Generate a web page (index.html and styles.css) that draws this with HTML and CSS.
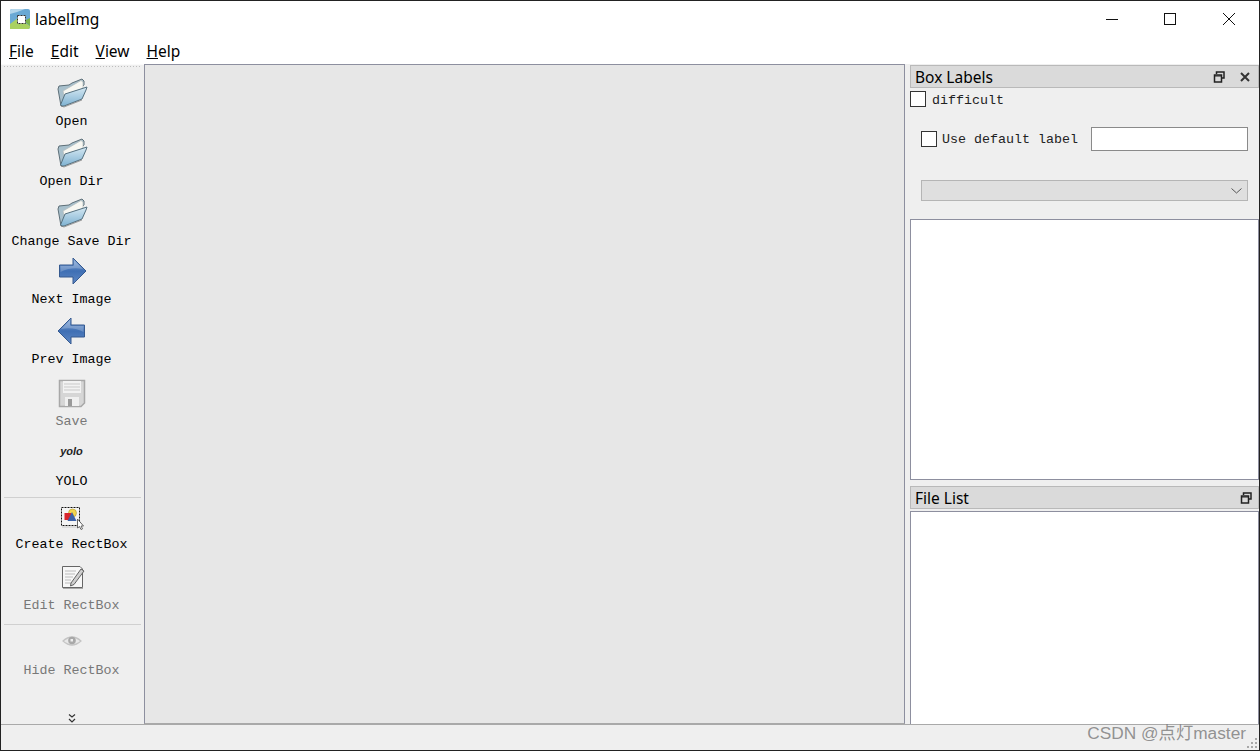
FILE: index.html
```html
<!DOCTYPE html>
<html lang="en">
<head>
<meta charset="utf-8">
<title>labelImg</title>
<link rel="stylesheet" href="styles.css">
</head>
<body>
<svg class="defs" width="0" height="0" aria-hidden="true">
  <defs>
    <linearGradient id="fb" x1="0" y1="0" x2="0" y2="1"><stop offset="0" stop-color="#d5e8f2"/><stop offset="1" stop-color="#7fb2d2"/></linearGradient>
    <linearGradient id="ab" x1="0" y1="0" x2="0" y2="1"><stop offset="0" stop-color="#8fb0dc"/><stop offset=".5" stop-color="#3f6fb4"/><stop offset="1" stop-color="#5f88c4"/></linearGradient>
    <symbol id="folder" viewBox="0 0 32 32">
      <path d="M2 12 L3 9 L13 8 L16 6 L26 2 L28 4 L28 8 L9 27 L5 29 Z" fill="#a8c0cc" stroke="#5d6f78" stroke-width="1"/>
      <path d="M7 14 L25 3.500 L27 5 L27 11 L9 22 Z" fill="#f7f7f2" stroke="#b5bcbc" stroke-width=".7"/>
      <path d="M6 29 L4.500 28 L9 17 L31 10 L30 13 L26 22 L8 29 Z" fill="url(#fb)" stroke="#55707f" stroke-width="1"/>
      <path d="M5 29 L8 30 L26 23" fill="none" stroke="#666" stroke-width="1" opacity=".6"/>
    </symbol>
    <symbol id="arrow" viewBox="0 0 32 32">
      <path d="M3.500 10 H17 V3 L30 16 L17 29 V22 H3.500 Z" fill="url(#ab)" stroke="#35598f" stroke-width="1"/>
      <path d="M4.500 11 H18 V5.500 L27 14 C18 12 10 14 4.500 17 Z" fill="#fff" opacity=".22"/>
    </symbol>
    <symbol id="restore" viewBox="0 0 12 12">
      <path d="M3.500 3 V1 H11 V7 H8.500" fill="none" stroke="#222" stroke-width="1.500"/>
      <rect x="1.500" y="4" width="7" height="7" fill="none" stroke="#222" stroke-width="1.500"/>
      <path d="M1.500 5 H8.500" stroke="#222" stroke-width="1"/>
    </symbol>
  </defs>
</svg>
<div class="window">
  <header class="titlebar">
    <svg class="app-icon" viewBox="0 0 20 20" width="20" height="20">
      <rect x="0" y="0" width="20" height="20" rx="2" fill="#6aa9d4"/>
      <path d="M0 5 Q8 3 15 0 H2 Q0 0 0 2 Z" fill="#b4d6ea"/>
      <path d="M0 20 V15 L8 9 L20 17 V18 Q20 20 18 20 Z" fill="#a9d160"/>
      <path d="M14 12 L20 9 V17 Z" fill="#7cb44c"/>
      <rect x="7.500" y="6.500" width="8" height="8" fill="#fff" stroke="#333" stroke-width="1" stroke-dasharray="2 1"/>
    </svg>
    <span class="app-name">labelImg</span>
    <div class="win-controls">
      <svg class="win-btn" width="12" height="12" viewBox="0 0 12 12"><path d="M0 6.500 H12" stroke="#111" stroke-width="1"/></svg>
      <svg class="win-btn" width="12" height="12" viewBox="0 0 12 12"><rect x=".5" y=".5" width="11" height="11" fill="none" stroke="#111" stroke-width="1"/></svg>
      <svg class="win-btn win-close" width="12" height="12" viewBox="0 0 12 12"><path d="M0 0 L12 12 M12 0 L0 12" stroke="#111" stroke-width="1"/></svg>
    </div>
  </header>
  <nav class="menubar">
    <span><u>F</u>ile</span>
    <span><u>E</u>dit</span>
    <span><u>V</u>iew</span>
    <span><u>H</u>elp</span>
  </nav>
  <main class="main">
    <aside class="toolbar">
      <div class="handle"></div>
      <div class="tool tool-first">
        <svg class="icon" width="32" height="32"><use href="#folder"/></svg>
        <span class="tool-label">Open</span>
      </div>
      <div class="tool">
        <svg class="icon" width="32" height="32"><use href="#folder"/></svg>
        <span class="tool-label">Open Dir</span>
      </div>
      <div class="tool">
        <svg class="icon" width="32" height="32"><use href="#folder"/></svg>
        <span class="tool-label">Change Save Dir</span>
      </div>
      <div class="tool tool-short">
        <svg class="icon" width="32" height="32"><use href="#arrow"/></svg>
        <span class="tool-label">Next Image</span>
      </div>
      <div class="tool">
        <svg class="icon icon-flip" width="32" height="32"><use href="#arrow"/></svg>
        <span class="tool-label">Prev Image</span>
      </div>
      <div class="tool tool-tall disabled">
        <svg class="icon" width="32" height="32" viewBox="0 0 32 32">
          <path d="M3.500 3.500 H28.500 V26 L25 29.500 H3.500 Z" fill="#d6d6d6" stroke="#a8a8a8" stroke-width="1.500"/>
          <rect x="7" y="4" width="18" height="12" fill="#f2f2f2"/>
          <path d="M8 7 H24 M8 10 H24 M8 13 H24" stroke="#c9c9c9"/>
          <rect x="9" y="20" width="14" height="9" fill="#f0f0f0"/>
          <rect x="12" y="22" width="4" height="7" fill="#9a9a9a"/>
        </svg>
        <span class="tool-label">Save</span>
      </div>
      <div class="tool tool-yolo">
        <div class="icon yolo-icon">yolo</div>
        <span class="tool-label">YOLO</span>
      </div>
      <div class="sep sep-first"></div>
      <div class="tool tool-create">
        <svg class="icon" width="32" height="32" viewBox="0 0 32 32">
          <rect x="5.500" y="6.500" width="18" height="18" fill="#f5f5f5" stroke="#111" stroke-width="1" stroke-dasharray="2 1"/>
          <path d="M6 26 H24" stroke="#ccc"/>
          <circle cx="16.500" cy="12" r="4" fill="#f2d54e" stroke="#b09a30" stroke-width=".6"/>
          <rect x="8.500" y="12" width="7" height="7" fill="#d8262c"/>
          <path d="M16 11 L20.500 20 H11.500 Z" fill="#3c62a8"/>
          <path d="M21.500 18 V27 L23.500 25.500 L25 28.500 L26.500 27.800 L25 25 H27.500 Z" fill="#fff" stroke="#555" stroke-width=".9"/>
        </svg>
        <span class="tool-label">Create RectBox</span>
      </div>
      <div class="tool tool-edit disabled">
        <svg class="icon" width="32" height="32" viewBox="0 0 32 32">
          <path d="M6.500 5.500 H24 L26.500 8 V26.500 H6.500 Z" fill="#f7f7f7" stroke="#666" stroke-width="1"/>
          <path d="M7 27.500 H27" stroke="#aaa"/>
          <path d="M9 10 H20 M9 13 H19 M9 16 H17 M9 19 H15 M9 22 H15" stroke="#bbb"/>
          <path d="M15 22 L25 8 L28 10 L18 23.500 L14.500 25 Z" fill="#cfcfcf" stroke="#555" stroke-width=".9"/>
        </svg>
        <span class="tool-label">Edit RectBox</span>
      </div>
      <div class="sep sep-second"></div>
      <div class="tool tool-hide disabled">
        <svg class="icon" width="32" height="32" viewBox="0 0 32 32">
          <path d="M7 16 Q16 8 25 16 Q16 24 7 16 Z" fill="#e8e8e8" stroke="#c4c4c4" stroke-width="1.200"/>
          <circle cx="16" cy="15.500" r="3.800" fill="#a8a8a8"/>
          <rect x="14.500" y="14" width="2.500" height="2.500" fill="#eee"/>
        </svg>
        <span class="tool-label">Hide RectBox</span>
      </div>
      <svg class="more" width="8" height="9" viewBox="0 0 8 9"><path d="M1 .5 L4 3 L7 .5 M1 5 L4 8 L7 5" fill="none" stroke="#333" stroke-width="1.200"/></svg>
    </aside>
    <section class="canvas"></section>
    <aside class="docks">
      <div class="dock-title">
        <span>Box Labels</span>
        <svg class="dock-btn" width="12" height="12"><use href="#restore"/></svg>
        <svg class="dock-btn" width="10" height="10" viewBox="0 0 10 10"><path d="M1 1 L9 9 M9 1 L1 9" stroke="#333" stroke-width="2"/></svg>
      </div>
      <label class="check-row">
        <input class="check" type="checkbox">
        <span class="check-text">difficult</span>
      </label>
      <div class="default-row">
        <input class="check" type="checkbox">
        <span class="default-label">Use default label</span>
        <input class="text-input" type="text">
      </div>
      <div class="combo">
        <svg width="11" height="6" viewBox="0 0 11 6"><path d="M.5 .5 L5.500 5 L10.500 .5" fill="none" stroke="#555" stroke-width="1"/></svg>
      </div>
      <div class="list list-labels"></div>
      <div class="dock-title dock-title-files">
        <span>File List</span>
        <svg class="dock-btn dock-btn-solo" width="12" height="12"><use href="#restore"/></svg>
      </div>
      <div class="list list-files"></div>
    </aside>
  </main>
  <footer class="statusbar">
    <svg class="grip" width="11" height="11" viewBox="0 0 11 11">
      <path d="M8 0h2v2H8z M4 4h2v2H4z M8 4h2v2H8z M0 8h2v2H0z M4 8h2v2H4z M8 8h2v2H8z" fill="#a8a8a8"/>
    </svg>
  </footer>
  <div class="watermark">CSDN @点灯master</div>
</div>
</body>
</html>
```
FILE: styles.css
```css
* { box-sizing: border-box; }
html, body { margin: 0; padding: 0; }
body { font-family: "Noto Sans", "Open Sans", sans-serif; background: #fff; }
.defs { position: absolute; }
.window {
  position: relative;
  width: 1260px;
  height: 751px;
  border: 1px solid #222;
  display: flex;
  flex-direction: column;
  overflow: hidden;
  background: #fff;
}
.titlebar {
  height: 36px;
  display: flex;
  align-items: center;
  padding-left: 9px;
  flex: none;
}
.app-icon { margin-right: 5px; }
.app-name { font-size: 15.5px; color: #000; }
.win-controls { margin-left: auto; display: flex; gap: 46px; padding-right: 24px; align-items: center; }
.win-btn { display: block; }
.win-close { margin-left: 1px; }
.menubar {
  height: 27px;
  flex: none;
  display: flex;
  gap: 17px;
  padding: 1px 0 0 8px;
  align-items: center;
  font-size: 15.5px;
  color: #000;
}
.main { flex: 1; display: flex; min-height: 0; background: #efefef; }
.toolbar {
  width: 143px;
  flex: none;
  display: flex;
  flex-direction: column;
  padding-right: 2px;
  font-family: "Liberation Mono", monospace;
  font-size: 13.33px;
  color: #000;
  border-top: 1px solid #fafafa;
}
.handle {
  height: 3px;
  margin: 0 0 0 2px;
  flex: none;
  background-image: radial-gradient(circle, #bdbdbd 0.8px, transparent 1px);
  background-size: 3px 3px;
}
.tool {
  height: 60px;
  flex: none;
  display: flex;
  flex-direction: column;
  align-items: center;
  justify-content: flex-end;
}
.tool-first { height: 63px; }
.tool-short { height: 58px; }
.tool-tall { height: 62px; }
.tool-create { height: 56px; }
.tool-edit { height: 61px; }
.tool-hide { height: 55px; }
.icon { display: block; flex: none; margin-bottom: 6px; }
.icon-flip { transform: scaleX(-1); }
.tool-yolo .icon { margin-bottom: 8px; }
.tool-create .icon { margin-bottom: 5px; }
.tool-hide .icon { margin-bottom: 7px; }
.tool-label { height: 16px; line-height: 14px; white-space: nowrap; }
.disabled .tool-label { color: #787878; }
.yolo-icon {
  width: 32px;
  height: 32px;
  text-align: center;
  font-family: "Liberation Sans", sans-serif;
  font-size: 11px;
  font-weight: bold;
  font-style: italic;
  line-height: 32px;
  color: #222;
}
.sep { height: 1px; margin: 0 1px 0 3px; background: #d0d0d0; flex: none; }
.sep-first { margin-top: 6px; }
.sep-second { margin-top: 9px; }
.more { margin: auto auto 1px; display: block; flex: none; }
.canvas {
  width: 761px;
  flex: none;
  background: #e7e7e7;
  border: 1px solid #8d8f9f;
  border-bottom-color: #a9a9a9;
}
.docks {
  width: 349px;
  margin-left: 5px;
  flex: none;
  display: flex;
  flex-direction: column;
  padding-top: 1px;
  font-family: "Liberation Mono", monospace;
  font-size: 13.33px;
  color: #222;
}
.dock-title {
  height: 23px;
  flex: none;
  display: flex;
  align-items: center;
  background: #dadada;
  border: 1px solid #b9b9b9;
  padding-left: 4px;
  padding-right: 8px;
  gap: 15px;
  font-family: "Noto Sans", "Open Sans", sans-serif;
  font-size: 15.5px;
  color: #000;
}
.dock-title span { margin-right: auto; }
.dock-btn { display: block; }
.dock-btn-solo { margin-right: -2px; }
.dock-title-files { margin-top: 6px; }
.check {
  appearance: none;
  width: 16px;
  height: 16px;
  margin: 0;
  background: #fff;
  border: 1px solid #333;
  flex: none;
}
.check-row { display: flex; align-items: center; gap: 6px; height: 16px; margin-top: 3px; flex: none; }
.check-text { padding-top: 2px; }
.default-row { display: flex; align-items: center; height: 24px; margin-top: 20px; padding-left: 11px; flex: none; }
.default-label { margin-left: 5px; }
.text-input {
  width: 157px;
  height: 24px;
  margin-left: 13px;
  background: #fff;
  border: 1px solid #8a8a8a;
  padding: 0;
}
.combo {
  width: 327px;
  height: 21px;
  margin: 29px 0 18px 11px;
  background: #dfdfdf;
  border: 1px solid #b5b5b5;
  display: flex;
  align-items: center;
  justify-content: flex-end;
  padding-right: 5px;
  flex: none;
}
.list { background: #fff; border: 1px solid #8d8f9f; flex: none; }
.list-labels { height: 261px; }
.list-files { margin-top: 2px; flex: 1; border-bottom: 0; }
.statusbar {
  height: 26px;
  flex: none;
  background: #efefef;
  border-top: 1px solid #a9a9a9;
  display: flex;
  justify-content: flex-end;
  align-items: flex-end;
  padding: 0 1px 1px 0;
}
.grip { display: block; }
.watermark {
  position: absolute;
  right: 13px;
  top: 720px;
  font-family: "Liberation Sans", "Noto Sans CJK SC", sans-serif;
  font-size: 17.3px;
  line-height: 24px;
  color: rgba(120, 120, 120, 0.8);
  white-space: nowrap;
}
```
